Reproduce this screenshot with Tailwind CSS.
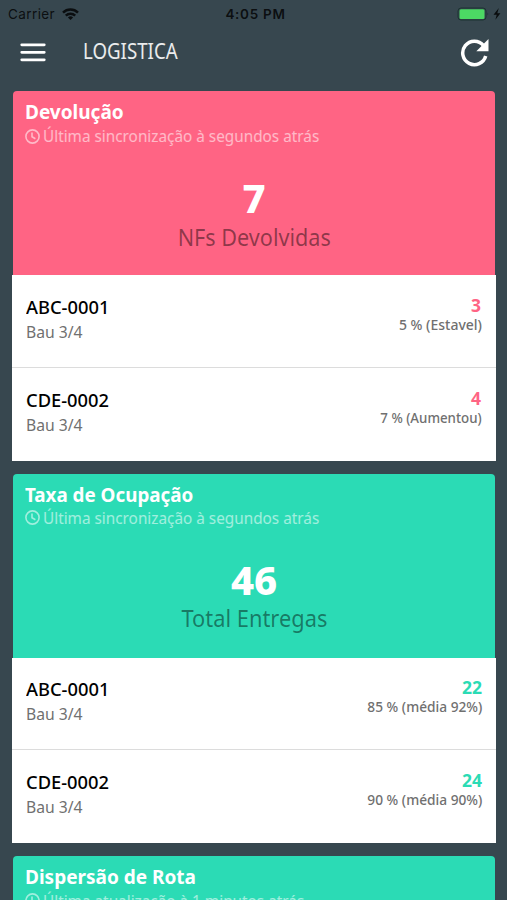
<!DOCTYPE html>
<html lang="pt-BR">
<head>
  <meta charset="UTF-8" />
  <meta name="viewport" content="width=device-width, initial-scale=1.0"/>
  <title>Logistica</title>
  <script src="https://cdn.jsdelivr.net/npm/@tailwindcss/browser@4"></script>
</head>
<body class="h-screen overflow-hidden bg-[#37474f] font-['Noto_Sans',sans-serif]">
  <!-- Status bar -->
  <div class="h-7 grid grid-cols-3 items-center pl-2 pr-1 font-['Inter',sans-serif] text-[13px] text-black/80">
    <div class="flex items-center gap-[7px]">
      <span class="text-[13.5px] tracking-[0.4px]">Carrier</span>
      <svg class="w-[17px] h-3" viewBox="0 0 17 12" fill="none" stroke="currentColor" stroke-width="2.5">
        <path d="M1 4.6a10.8 10.8 0 0 1 15 0M3.8 7.6a6.8 6.8 0 0 1 9.4 0"/>
        <path d="M8.5 12 5.9 9.4a3.8 3.8 0 0 1 5.2 0z" fill="currentColor" stroke="none"/>
      </svg>
    </div>
    <div class="text-center font-semibold"><span class="inline-block whitespace-nowrap text-[13.5px] tracking-[0.7px]">4:05 PM</span></div>
    <div class="flex items-center justify-end">
      <svg class="w-[46px] h-[14px]" viewBox="0 0 46 14">
        <rect x="1" y="1" width="28" height="12" rx="3" fill="none" stroke="#1d3432" stroke-width="1"/>
        <rect x="2.5" y="2.3" width="25" height="9.6" rx="1.5" fill="#4cd964"/>
        <path d="M30.5 5.5q1.5 1.5 0 3z" fill="#1d3432"/>
        <path d="M41.8 1 36.5 7.7h3.2l-1.3 5.1 5-6.6h-3.1z" fill="#0a0d0e"/>
      </svg>
    </div>
  </div>

  <!-- Toolbar -->
  <div class="h-[63.4px] flex items-start pl-5 pr-[18px] text-white">
    <svg class="mt-[14px] w-[26px] h-5" viewBox="0 0 26 20" fill="none" stroke="currentColor" stroke-width="2.7" stroke-linecap="round">
      <path d="M1.7 2.8h22.6M1.7 10.3h22.6M1.7 17.8h22.6"/>
    </svg>
    <h1 class="ml-[37px] mt-[9px] text-[21px] leading-7 font-normal origin-left scale-x-[.89] text-white/90">LOGISTICA</h1>
    <svg class="ml-auto mt-[10px] w-[29px] h-[29px]" viewBox="0 0 29 29">
      <path d="M23.4 7.4A11.7 11.7 0 1 0 25.7 18" fill="none" stroke="currentColor" stroke-width="3.5"/>
      <path d="M28.5 1v12.2H16.3z" fill="currentColor"/>
    </svg>
  </div>

  <main class="flex flex-col gap-[12.5px] pl-3 pr-[11px]">
    <section class="shrink-0">
      <div class="mx-px h-[184px] rounded-t-[4px] bg-[#ff6484] px-3 pt-[7px]">
        <h2 class="w-max origin-left scale-x-95 text-[20px] leading-[28px] font-bold text-white">Devolução</h2>
        <div class="flex h-5 items-center gap-[3px] text-white/55">
          <svg class="w-[15px] h-[15px] shrink-0" viewBox="0 0 15 15" fill="none" stroke="currentColor" stroke-width="1.6"><circle cx="7.5" cy="7.5" r="6.6"/><path d="M7 3.5v4.3l3.4 2"/></svg>
          <span class="w-max origin-left scale-x-[.957] whitespace-nowrap text-[16px] leading-5">Última sincronização à segundos atrás</span>
        </div>
        <div class="mt-[30px] text-center text-[40px] leading-[44px] font-extrabold text-white">7</div>
        <div class="mt-px text-center text-[23.5px] leading-8 font-normal text-black/45"><span class="inline-block scale-x-[.92]">NFs Devolvidas</span></div>
      </div>
      <div class="bg-white text-[#707070]">
        <div class="flex h-[93px] justify-between pl-[14px] pr-[14px] border-b border-[#dcdcdc]">
          <div class="pt-5">
            <div class="w-max origin-left scale-x-[.99] text-[18.5px] leading-6 font-medium text-black">ABC-0001</div>
            <div class="w-max origin-left scale-x-[.98] text-[16px] leading-[26px]">Bau 3/4</div>
          </div>
          <div class="flex flex-col items-end pt-5">
            <div class="text-[17.5px] leading-[21px] font-bold text-[#ff6484] pr-px">3</div>
            <div class="w-max text-[14px] leading-[18px] font-medium">5 % (Estavel)</div>
          </div>
        </div>
        <div class="flex h-[93px] justify-between pl-[14px] pr-[14px]">
          <div class="pt-5">
            <div class="w-max origin-left scale-x-[.99] text-[18.5px] leading-6 font-medium text-black">CDE-0002</div>
            <div class="w-max origin-left scale-x-[.98] text-[16px] leading-[26px]">Bau 3/4</div>
          </div>
          <div class="flex flex-col items-end pt-5">
            <div class="text-[17.5px] leading-[21px] font-bold text-[#ff6484] pr-px">4</div>
            <div class="w-max origin-right scale-x-95 text-[14px] leading-[18px] font-medium">7 % (Aumentou)</div>
          </div>
        </div>
      </div>
    </section>

    <section class="shrink-0">
      <div class="mx-px h-[184px] rounded-t-[4px] bg-[#2bdbb5] px-3 pt-[7px]">
        <h2 class="w-max origin-left scale-x-[.94] text-[20px] leading-[28px] font-bold text-white">Taxa de Ocupação</h2>
        <div class="flex h-5 -mt-px mb-px items-center gap-[3px] text-white/55">
          <svg class="w-[15px] h-[15px] shrink-0" viewBox="0 0 15 15" fill="none" stroke="currentColor" stroke-width="1.6"><circle cx="7.5" cy="7.5" r="6.6"/><path d="M7 3.5v4.3l3.4 2"/></svg>
          <span class="w-max origin-left scale-x-[.957] whitespace-nowrap text-[16px] leading-5">Última sincronização à segundos atrás</span>
        </div>
        <div class="mt-[30px] text-center text-[40px] leading-[44px] font-extrabold text-white">46</div>
        <div class="text-center text-[23.5px] leading-8 font-normal text-black/45"><span class="inline-block scale-x-[.93]">Total Entregas</span></div>
      </div>
      <div class="bg-white text-[#707070]">
        <div class="flex h-[92.6px] justify-between pl-[14px] pr-[14px] border-b border-[#dcdcdc]">
          <div class="pt-[19px]">
            <div class="w-max origin-left scale-x-[.99] text-[18.5px] leading-6 font-medium text-black">ABC-0001</div>
            <div class="w-max origin-left scale-x-[.98] text-[16px] leading-[26px]">Bau 3/4</div>
          </div>
          <div class="flex flex-col items-end pt-[19px]">
            <div class="text-[17.5px] leading-[21px] font-bold text-[#2bdbb5]">22</div>
            <div class="w-max origin-right scale-x-[.98] text-[14px] leading-[18px] font-medium">85 % (média 92%)</div>
          </div>
        </div>
        <div class="flex h-[93px] justify-between pl-[14px] pr-[14px]">
          <div class="pt-5">
            <div class="w-max origin-left scale-x-[.99] text-[18.5px] leading-6 font-medium text-black">CDE-0002</div>
            <div class="w-max origin-left scale-x-[.98] text-[16px] leading-[26px]">Bau 3/4</div>
          </div>
          <div class="flex flex-col items-end pt-5">
            <div class="text-[17.5px] leading-[21px] font-bold text-[#2bdbb5]">24</div>
            <div class="w-max origin-right scale-x-[.98] text-[14px] leading-[18px] font-medium">90 % (média 90%)</div>
          </div>
        </div>
      </div>
    </section>

    <section class="shrink-0">
      <div class="mx-px h-[184px] rounded-t-[4px] bg-[#2bdbb5] px-3 pt-[7px]">
        <h2 class="w-max origin-left scale-x-95 text-[20px] leading-[28px] font-bold text-white">Dispersão de Rota</h2>
        <div class="flex h-5 items-center gap-[3px] text-white/55">
          <svg class="w-[15px] h-[15px] shrink-0" viewBox="0 0 15 15" fill="none" stroke="currentColor" stroke-width="1.6"><circle cx="7.5" cy="7.5" r="6.6"/><path d="M7 3.5v4.3l3.4 2"/></svg>
          <span class="w-max origin-left scale-x-[.957] whitespace-nowrap text-[16px] leading-5">Última atualização à 1 minutos atrás</span>
        </div>
      </div>
    </section>
  </main>
</body>
</html>
